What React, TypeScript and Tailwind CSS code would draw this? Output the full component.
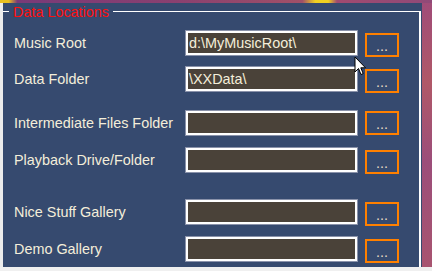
const font = { fontFamily: '"Liberation Sans", Arial, sans-serif' }

type Row = { label: string; value?: string; mt: string; btnMt: string }

const rows: Row[] = [
  { label: "Music Root", value: "d:\\MyMusicRoot\\", mt: "mt-[12px]", btnMt: "mt-[2px]" },
  { label: "Data Folder", value: "\\XXData\\", mt: "mt-[12px]", btnMt: "mt-[2px]" },
  { label: "Intermediate Files Folder", mt: "mt-[20px]", btnMt: "mt-0" },
  { label: "Playback Drive/Folder", mt: "mt-[13px]", btnMt: "mt-[2px]" },
  { label: "Nice Stuff Gallery", mt: "mt-[28px]", btnMt: "mt-[2px]" },
  { label: "Demo Gallery", mt: "mt-[13px]", btnMt: "mt-[2px]" },
]

function PathRow({ row }: { row: Row }) {
  return (
    <div className={`flex h-[24px] items-start ${row.mt}`}>
      <div className="flex h-[24px] w-[183px] shrink-0 items-center pl-[11px] text-[14.4px] leading-none text-[#f4eeda]">
        {row.label}
      </div>
      <div className="flex h-[24px] w-[171px] shrink-0 items-center border-2 border-white bg-[#4a4239] pl-[1px] text-[14.4px] leading-none text-[#f4eeda] shadow-[0_0_0_1px_#8a92aa]">
        {row.value}
      </div>
      <button
        type="button"
        className={`ml-[8px] flex h-[24px] w-[34px] shrink-0 justify-center border-2 border-[#ff8000] pt-[4px] text-[14.4px] leading-[14px] text-[#e8dcc4] ${row.btnMt}`}
      >
        ...
      </button>
    </div>
  )
}

export default function App() {
  return (
    <div className="flex h-[271px] w-[432px] flex-col overflow-hidden" style={font}>
      <div className="h-[3px] bg-[linear-gradient(90deg,#e8c020_0%,#e8c020_2%,#7a3a78_4%,#8a4070_40%,#a05068_70%,#f0d020_73%,#f0d020_76%,#a04a70_78%,#904a78_100%)]" />
      <div className="relative flex h-[264px]">
        <div className="w-[3px] bg-[#ececec]" />
        <div className="flex w-[419px] flex-col bg-[#364a6f]">
          <fieldset className="h-full w-[418px] border-t border-r-2 border-white">
            <legend className="relative top-[1px] ml-[6px] px-[4px] text-[14.4px] leading-[16px] text-[#ff1010]">
              Data Locations
            </legend>
            {rows.map((r) => (
              <PathRow key={r.label} row={r} />
            ))}
          </fieldset>
        </div>
        <div className="flex-1 bg-[linear-gradient(180deg,#a04c78_0%,#b05868_30%,#9c4e7a_60%,#a85470_100%)]" />

        {/* mouse pointer */}
        <svg className="absolute top-[53px] left-[354px]" width="13" height="20" viewBox="0 0 13 20">
          <path
            d="M1 1 L1 16 L4.5 12.5 L7 18.5 L9.2 17.6 L6.8 11.8 L11.5 11.8 Z"
            fill="#fff"
            stroke="#000"
            strokeWidth="1"
            strokeLinejoin="round"
          />
        </svg>
      </div>
      <div className="flex-1 bg-[#f0f0f0]" />
    </div>
  )
}
